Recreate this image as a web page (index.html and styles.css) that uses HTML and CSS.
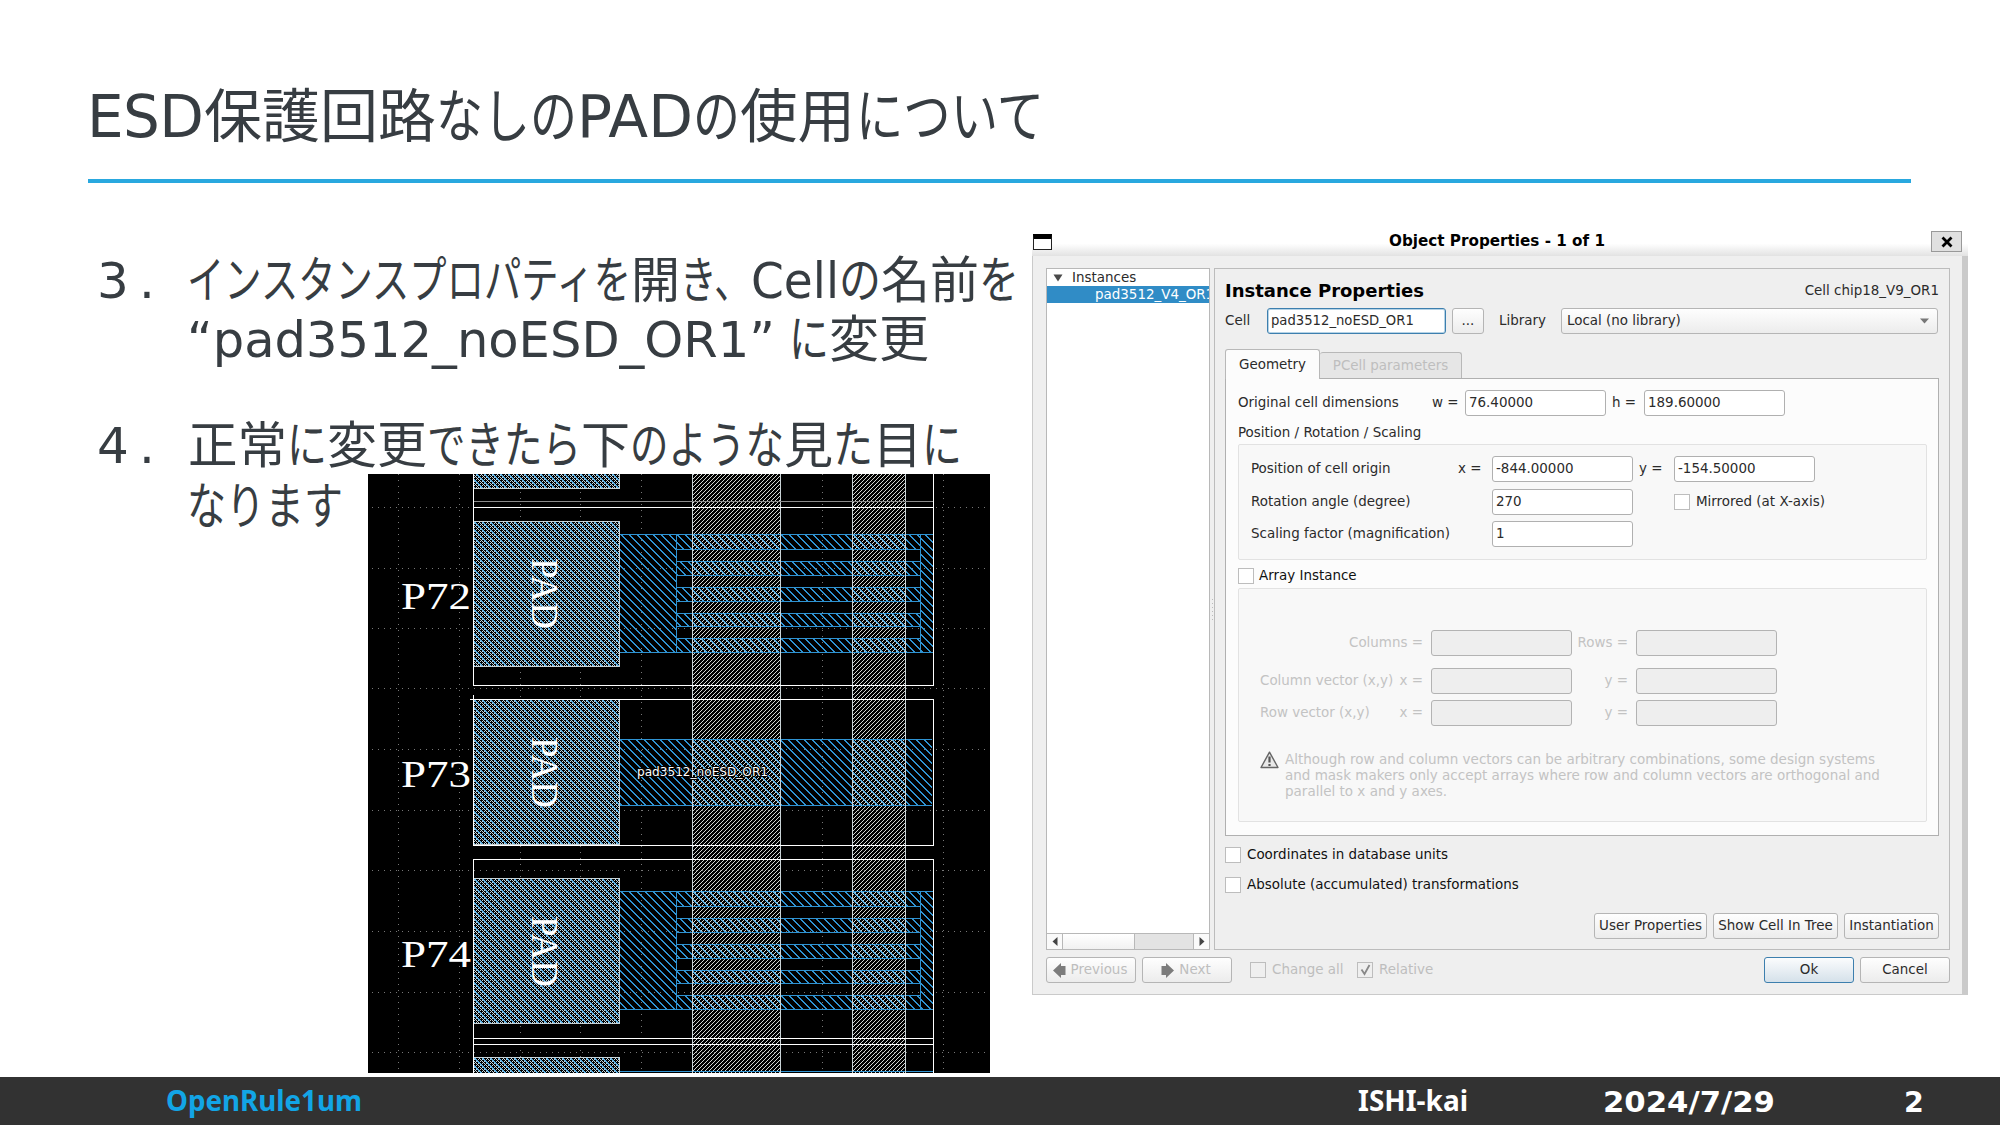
FILE: index.html
```html
<!DOCTYPE html>
<html lang="ja">
<head>
<meta charset="utf-8">
<title>ESD保護回路なしのPADの使用について</title>
<link rel="stylesheet" href="styles.css">
</head>
<body>
<div class="slide">
  <header class="head">
    <svg class="line" width="980" height="80" viewBox="80 75 980 80" font-size="58">
      <text x="87" y="137" textLength="117">ESD</text><text x="204" y="137" textLength="232" lengthAdjust="spacingAndGlyphs">保護回路</text><text x="436" y="137" textLength="141" lengthAdjust="spacingAndGlyphs">なしの</text><text x="577" y="137" textLength="116" lengthAdjust="spacingAndGlyphs">PAD</text><text x="693" y="137" textLength="47" lengthAdjust="spacingAndGlyphs">の</text><text x="740" y="137" textLength="115" lengthAdjust="spacingAndGlyphs">使用</text><text x="856" y="137" textLength="188" lengthAdjust="spacingAndGlyphs">について</text>
    </svg>
  </header>
  <main class="main">
    <section class="steps">
      <svg class="line" width="930" height="60" viewBox="90 250 930 60" font-size="50">
        <text x="97" y="297.500">3</text><text x="139" y="297.500">.</text><text x="187" y="297.500" textLength="444" lengthAdjust="spacingAndGlyphs">インスタンスプロパティを</text><text x="631" y="297.500" textLength="49" lengthAdjust="spacingAndGlyphs">開</text><text x="680" y="297.500" textLength="71" lengthAdjust="spacingAndGlyphs">き、</text><text x="751" y="297.500" textLength="88" lengthAdjust="spacingAndGlyphs">Cell</text><text x="839" y="297.500" textLength="42" lengthAdjust="spacingAndGlyphs">の</text><text x="881" y="297.500" textLength="98" lengthAdjust="spacingAndGlyphs">名前</text><text x="979" y="297.500" textLength="40" lengthAdjust="spacingAndGlyphs">を</text>
      </svg>
      <svg class="line" width="930" height="66" viewBox="90 310 930 66" font-size="50">
        <text x="187" y="357" textLength="588" lengthAdjust="spacingAndGlyphs">“pad3512_noESD_OR1”</text><text x="789" y="357" textLength="40" lengthAdjust="spacingAndGlyphs">に</text><text x="829" y="357" textLength="100" lengthAdjust="spacingAndGlyphs">変更</text>
      </svg>
      <svg class="line four" width="930" height="58" viewBox="90 416 930 58" font-size="50">
        <text x="97" y="463">4</text><text x="139" y="463">.</text><text x="188" y="463" textLength="99" lengthAdjust="spacingAndGlyphs">正常</text><text x="287" y="463" textLength="40" lengthAdjust="spacingAndGlyphs">に</text><text x="327" y="463" textLength="100" lengthAdjust="spacingAndGlyphs">変更</text><text x="427" y="463" textLength="154" lengthAdjust="spacingAndGlyphs">できたら</text><text x="581" y="463" textLength="49" lengthAdjust="spacingAndGlyphs">下</text><text x="630" y="463" textLength="154" lengthAdjust="spacingAndGlyphs">のような</text><text x="784" y="463" textLength="49" lengthAdjust="spacingAndGlyphs">見</text><text x="833" y="463" textLength="40" lengthAdjust="spacingAndGlyphs">た</text><text x="873" y="463" textLength="49" lengthAdjust="spacingAndGlyphs">目</text><text x="922" y="463" textLength="40" lengthAdjust="spacingAndGlyphs">に</text>
      </svg>
      <div class="last">
        <svg class="line" width="278" height="66" viewBox="90 474 278 66" font-size="50">
          <text x="187" y="523.500" textLength="156" lengthAdjust="spacingAndGlyphs">なります</text>
        </svg>
        <svg class="chip" width="622" height="599" viewBox="368 474 622 599" shape-rendering="crispEdges">
          <defs>
            <pattern id="metal" width="8" height="8" patternUnits="userSpaceOnUse"><path class="b" d="M0 0h2v1h-2zM1 1h2v1h-2zM2 2h2v1h-2zM3 3h2v1h-2zM4 4h2v1h-2zM5 5h2v1h-2zM6 6h2v1h-2zM7 7h1v1h-1zM0 7h1v1h-1z"/></pattern>
            <pattern id="metalpad" width="8" height="8" patternUnits="userSpaceOnUse"><path class="l" d="M0 0h2v1h-2zM1 1h2v1h-2zM2 2h2v1h-2zM3 3h2v1h-2zM4 4h2v1h-2zM5 5h2v1h-2zM6 6h2v1h-2zM7 7h1v1h-1zM0 7h1v1h-1z"/></pattern>
            <pattern id="poly" width="4" height="4" patternUnits="userSpaceOnUse"><path class="g" d="M3 0h1v1h-1zM2 1h1v1h-1zM1 2h1v1h-1zM0 3h1v1h-1z"/></pattern>
            <pattern id="open" width="4" height="4" patternUnits="userSpaceOnUse"><path class="p" d="M3 0h1v1h-1zM2 1h1v1h-1zM1 2h1v1h-1zM0 3h1v1h-1zM1 0h1v1h-1zM3 2h1v1h-1z"/></pattern>
            <pattern id="dh" width="6" height="2" patternUnits="userSpaceOnUse"><rect width="1" height="2" fill="#777"/></pattern>
            <pattern id="dv" width="2" height="6" patternUnits="userSpaceOnUse"><rect width="2" height="1" fill="#777"/></pattern>
            <g id="pad"><rect width="146" height="146" fill="#000"/><rect width="146" height="146" fill="url(#open)"/><rect width="146" height="146" fill="url(#metalpad)"/><rect class="o" x=".5" y=".5" width="146" height="145"/></g>
            <g id="comb">
              <rect width="57" height="118" fill="url(#metal)"/><rect x="301" width="13" height="118" fill="url(#metal)"/>
              <g fill="url(#metal)"><rect x="57" width="244" height="15"/><rect x="57" y="27" width="244" height="14"/><rect x="57" y="53" width="244" height="14"/><rect x="57" y="79" width="244" height="13"/><rect x="57" y="104" width="244" height="14"/></g>
              <path class="m" d="M0 .5H313M0 118.500H313M56.500 0V118M300.500 0V118M57 15.500H301M57 27.500H301M57 41.500H301M57 53.500H301M57 67.500H301M57 79.500H301M57 92.500H301M57 104.500H301"/>
            </g>
            <g id="over" fill="url(#metalpad)"><rect width="89" height="15"/><rect y="27" width="89" height="14"/><rect y="53" width="89" height="14"/><rect y="79" width="89" height="13"/><rect y="104" width="89" height="14"/><rect x="160" width="54" height="15"/><rect x="160" y="27" width="54" height="14"/><rect x="160" y="53" width="54" height="14"/><rect x="160" y="79" width="54" height="13"/><rect x="160" y="104" width="54" height="14"/></g>
          </defs>
          <rect x="368" y="474" width="622" height="599"/>
          <g fill="url(#dv)"><rect x="398" y="474" width="1" height="599"/><rect x="459" y="474" width="1" height="599"/><rect x="520" y="474" width="1" height="599"/><rect x="580" y="474" width="1" height="599"/><rect x="641" y="474" width="1" height="599"/><rect x="822" y="474" width="1" height="599"/><rect x="943" y="474" width="1" height="599"/></g>
          <g fill="url(#dh)"><rect x="368" y="507" width="622" height="1"/><rect x="368" y="568" width="622" height="1"/><rect x="368" y="628" width="622" height="1"/><rect x="368" y="688" width="622" height="1"/><rect x="368" y="749" width="622" height="1"/><rect x="368" y="810" width="622" height="1"/><rect x="368" y="870" width="622" height="1"/><rect x="368" y="931" width="622" height="1"/><rect x="368" y="992" width="622" height="1"/><rect x="368" y="1052" width="622" height="1"/></g>
          <g fill="url(#poly)"><rect x="692" y="474" width="89" height="599"/><rect x="852" y="474" width="54" height="599"/></g>
          <use href="#comb" x="620" y="534"/><use href="#over" x="692" y="534"/>
          <rect x="620" y="739" width="312" height="66" fill="url(#metal)"/><path class="m" d="M620 739.500H932M620 805.500H932"/>
          <g fill="url(#metalpad)"><rect x="692" y="740" width="89" height="65"/><rect x="852" y="740" width="54" height="65"/></g>
          <use href="#comb" x="620" y="891"/><use href="#over" x="692" y="891"/>
          <path class="m" d="M620 1071.500H933"/>
          <path class="o" d="M692.500 474V1073M780.500 474V1073M852.500 474V1073M905.500 474V1073"/>
          <use href="#pad" x="473" y="343"/>
          <use href="#pad" x="473" y="521"/>
          <use href="#pad" x="473" y="699"/>
          <use href="#pad" x="473" y="878"/>
          <use href="#pad" x="473" y="1057"/>
          <path class="grey" d="M474 501.500H933"/>
          <path class="w" d="M473.500 474V685.500H933.500V474M473 507.500H933M473.500 695V845.500H933.500V699.500H470M473.500 1073V859.500H933.500V1073M473 1038.500H933M473 1044.500H933"/>
          <g class="serif">
            <text x="401" y="609" textLength="70" lengthAdjust="spacingAndGlyphs">P72</text><text x="401" y="787" textLength="70" lengthAdjust="spacingAndGlyphs">P73</text><text x="401" y="967" textLength="70" lengthAdjust="spacingAndGlyphs">P74</text>
            <text transform="translate(532 558) rotate(90)" textLength="71">PAD</text><text transform="translate(532 737) rotate(90)" textLength="71">PAD</text><text transform="translate(532 916) rotate(90)" textLength="71">PAD</text>
          </g>
          <text class="tag" x="637" y="776" textLength="131" lengthAdjust="spacingAndGlyphs">pad3512_noESD_OR1</text>
        </svg>
      </div>
    </section>

    <section class="dialog">
      <div class="bar">
        <span class="winicon"></span><b>Object Properties - 1 of 1</b>
        <span class="close"><svg width="12" height="12" viewBox="0 0 12 12"><path d="M1.500 1.500L10.500 10.500M10.500 1.500L1.500 10.500" stroke="#000" stroke-width="2.800"/></svg></span>
      </div>
      <div class="body">
        <div class="cols">
          <div class="tree">
            <div class="row"><svg width="10" height="8" viewBox="0 0 10 8"><path d="M.5 .5H9.500L5 7.500z" fill="#4a4a4a"/></svg><span>Instances</span></div>
            <div class="row sel">pad3512_V4_OR1</div>
            <div class="scroll"><span class="sb"><svg width="6" height="9" viewBox="0 0 6 9"><path d="M5.500 0V9L.5 4.500z" fill="#444"/></svg></span><span class="thumb"></span><span class="trough"></span><span class="sb"><svg width="6" height="9" viewBox="0 0 6 9"><path d="M.5 0V9L5.500 4.500z" fill="#444"/></svg></span></div>
          </div>
          <div class="grip"><i></i><i></i><i></i><i></i><i></i><i></i></div>
          <div class="panel">
            <div class="ptitle"><h2>Instance Properties</h2><span>Cell chip18_V9_OR1</span></div>
            <div class="cellrow"><span>Cell</span><span class="in focus">pad3512_noESD_OR1</span><span class="btn more">...</span><span class="lib">Library</span><span class="btn combo">Local (no library)<svg width="9" height="6" viewBox="0 0 9 6"><path d="M0 .5H9L4.500 5.500z" fill="#777"/></svg></span></div>
            <div class="tabs"><span class="tab on">Geometry</span><span class="tab off">PCell parameters</span></div>
            <div class="pane">
              <div class="dims"><span>Original cell dimensions</span><span>w =</span><span class="in">76.40000</span><span class="lab">h =</span><span class="in">189.60000</span></div>
              <div class="cap">Position / Rotation / Scaling</div>
              <div class="group pos">
                <span>Position of cell origin</span><span>x =</span><span class="in">-844.00000</span><span class="lab">y =</span><span class="in last-in">-154.50000</span>
                <span>Rotation angle (degree)</span><span></span><span class="in">270</span><span></span><span class="chk"><i></i>Mirrored (at X-axis)</span>
                <span class="wide">Scaling factor (magnification)</span><span class="in">1</span>
              </div>
              <div class="chk arr"><i></i>Array Instance</div>
              <div class="group array">
                <div class="vec first"><span class="r">Columns =</span><span class="in dis"></span><span class="r">Rows =</span><span class="in dis"></span></div>
                <div class="vec"><span class="two"><span>Column vector (x,y)</span><span>x =</span></span><span class="in dis"></span><span class="r">y =</span><span class="in dis"></span></div>
                <div class="vec"><span class="two"><span>Row vector (x,y)</span><span>x =</span></span><span class="in dis"></span><span class="r">y =</span><span class="in dis"></span></div>
                <div class="warn"><svg width="19" height="18" viewBox="0 0 19 18"><path d="M9.500 1.200L18 16.500H1z" fill="#e9e9e9" stroke="#666" stroke-width="1.400" stroke-linejoin="round"/><path d="M9.500 5.500V11.500M9.500 13V15" stroke="#555" stroke-width="2.200"/></svg><p>Although row and column vectors can be arbitrary combinations, some design systems<br>and mask makers only accept arrays where row and column vectors are orthogonal and<br>parallel to x and y axes.</p></div>
              </div>
            </div>
            <div class="chk c1"><i></i>Coordinates in database units</div>
            <div class="chk c2"><i></i>Absolute (accumulated) transformations</div>
            <div class="pbtns"><span class="btn b1">User Properties</span><span class="btn b2">Show Cell In Tree</span><span class="btn b3">Instantiation</span></div>
          </div>
        </div>
        <div class="foot">
          <span class="btn nav"><svg width="13" height="15" viewBox="0 0 13 15"><path d="M0 7.500L8 0V3H12.500V12H8V15z" fill="#7c7c7c"/></svg>Previous</span>
          <span class="btn nav"><svg width="13" height="15" viewBox="0 0 13 15"><path d="M13 7.500L5 0V3H.5V12H5V15z" fill="#7c7c7c"/></svg>Next</span>
          <span class="chk ca"><i></i>Change all</span>
          <span class="chk rel"><i><svg width="11" height="12" viewBox="0 0 11 12"><path d="M1.500 5.500L4.500 10L9.500 1" fill="none" stroke="#888" stroke-width="1.800"/></svg></i>Relative</span>
          <span class="btn ok">Ok</span><span class="btn cancel">Cancel</span>
        </div>
      </div>
    </section>
  </main>
  <footer class="footer">
    <svg width="2000" height="48" viewBox="0 1077 2000 48">
      <text class="brand" x="166" y="1110.500" textLength="196" lengthAdjust="spacingAndGlyphs">OpenRule1um</text>
      <text x="1358" y="1110.500" textLength="110" lengthAdjust="spacingAndGlyphs">ISHI-kai</text>
      <text class="num" x="1603" y="1112" textLength="172" lengthAdjust="spacingAndGlyphs">2024/7/29</text>
      <text class="num" x="1904" y="1112">2</text>
    </svg>
  </footer>
</div>
</body>
</html>
```
FILE: styles.css
```css
* { box-sizing: border-box; }
body { margin: 0; background: #fff; }
svg { display: block; flex: none; }
.slide { width: 2000px; height: 1125px; display: flex; flex-direction: column; overflow: hidden; }

.head { height: 183px; margin: 0 89px 0 88px; padding-top: 75px; border-bottom: 4px solid #29a8df; }
.head .line { margin-left: -8px; }
.line { overflow: visible; fill: #373d42; font-family: "DejaVu Sans", "Noto Sans CJK JP", sans-serif; }
.main { display: flex; height: 894px; padding-top: 42px; }
.steps { width: 942px; margin: 25px 0 0 90px; flex: none; }
.steps .four { margin-top: 40px; }
.last { display: flex; align-items: flex-start; }

.chip .b { fill: #2f93d2; }
.chip .l { fill: #5db2e6; }
.chip .g { fill: #d4d6d2; }
.chip .p { fill: #c3d6de; }
.chip .o { fill: none; stroke: #c9d3d6; }
.chip .m { fill: none; stroke: #2f93d2; }
.chip .w { fill: none; stroke: #fff; }
.chip .grey { stroke: #8a8a8a; }
.chip .serif { fill: #fff; font: 37px "Liberation Serif", serif; }
.chip .tag { fill: #fff; stroke: #000; stroke-width: 2px; paint-order: stroke; font: 12px "DejaVu Sans", sans-serif; }

.dialog { width: 936px; height: 770px; flex: none; font: 13.44px/16px "DejaVu Sans", sans-serif; color: #2b2b2b; white-space: nowrap; }
.bar { height: 31px; padding: 0 6px 0 1px; display: grid; grid-template-columns: 30px 1fr 31px; align-items: center; background: linear-gradient(#fff 60%, #e2e2e2); }
.bar b { text-align: center; font-size: 15.2px; color: #000; }
.winicon { width: 19px; height: 16px; border: 1px solid #222; border-top: 5px solid #000; background: #fff; margin-top: 2px; }
.close { width: 31px; height: 21px; border: 1px solid #999; background: #e0e0e0; display: flex; align-items: center; justify-content: center; margin-top: 2px; }
.body { height: 739px; background: #efefef; border: solid #cacaca; border-width: 0 6px 1px 1px; padding: 12px 12px 0 13px; }
.cols { display: flex; height: 682px; }
.tree { width: 164px; background: #fff; border: 1px solid #b8b8b8; display: flex; flex-direction: column; overflow: hidden; }
.row { height: 17px; display: flex; align-items: center; padding: 1px 0 0 6px; gap: 9px; flex: none; }
.sel { background: #308cc6; color: #fff; padding-left: 48px; }
.scroll { margin-top: auto; height: 16px; display: flex; border-top: 1px solid #b8b8b8; }
.sb { width: 15px; display: flex; align-items: center; justify-content: center; background: #fafafa; }
.thumb { width: 73px; border: solid #b8b8b8; border-width: 0 1px; background: linear-gradient(#fff, #f1f1f1); }
.trough { flex: 1; background: #e3e3e3; border-right: 1px solid #b8b8b8; }
.grip { width: 4px; display: flex; flex-direction: column; justify-content: center; align-items: center; gap: 3px; }
.grip i { width: 1px; height: 1px; background: #bbb; }
.panel { flex: 1; border: 1px solid #bcbcbc; padding: 0 10px; display: flex; flex-direction: column; }
.ptitle { height: 39px; display: flex; justify-content: space-between; align-items: center; padding-top: 4px; }
h2 { margin: 0; font-size: 18px; color: #000; }
.cellrow { display: grid; grid-template-columns: 42px 179px 38px 77px 377px; height: 26px; align-items: center; }
.more { margin-left: 6px; }
.lib { padding-left: 15px; }
.in { height: 26px; border: 1px solid #b0b0b0; border-radius: 3px; background: #fff; padding: 0 3px; display: flex; align-items: center; color: #2b2b2b; }
.focus { border-color: #3d7fae; box-shadow: inset 0 0 0 1px #b5d3e6; font-size: 13.2px; }
.dis { background: #eee; border-color: #b3b3b3; }
.btn { height: 26px; border: 1px solid #b5b5b5; border-radius: 3px; background: linear-gradient(#fefefe, #ececec); display: flex; align-items: center; justify-content: center; }
.combo { justify-content: space-between; padding: 0 8px 0 5px; }
.tabs { height: 44px; display: flex; align-items: flex-end; }
.tab { display: flex; align-items: center; justify-content: center; border: 1px solid #b8b8b8; border-bottom: 0; border-radius: 3px 3px 0 0; }
.on { width: 95px; height: 30px; background: #fcfcfc; margin-bottom: -1px; position: relative; }
.off { width: 142px; height: 26px; background: #e6e6e6; color: #bebebe; border-left: 0; }
.pane { height: 458px; border: 1px solid #b0b0b0; background: #fcfcfc; padding: 11px 11px 0 12px; }
.dims { display: grid; grid-template-columns: 194px 33px 141px 38px 141px; align-items: center; }
.lab { padding-left: 6px; }
.cap { height: 28px; padding-top: 9px; }
.group { border: 1px solid #e2e2e2; background: #f8f8f8; border-radius: 2px; }
.pos { height: 116px; padding: 11px 0 0 12px; display: grid; grid-template-columns: 207px 34px 141px 41px 1fr; grid-auto-rows: 26px; row-gap: 6.500px; align-items: center; }
.last-in { width: 141px; }
.wide { grid-column: span 2; }
.chk { display: flex; align-items: center; gap: 6px; }
.chk i { width: 16px; height: 16px; border: 1px solid #bdbdbd; background: #fff; display: flex; align-items: center; justify-content: center; flex: none; }
.arr { height: 28px; gap: 5px; padding-top: 4px; color: #111; }
.array { height: 234px; padding: 41px 0 0 21px; color: #c3c3c3; }
.vec { display: grid; grid-template-columns: 171px 141px 64px 141px; align-items: center; margin-bottom: 6px; }
.first { margin-bottom: 12px; }
.r { text-align: right; padding-right: 8px; }
.two { display: flex; justify-content: space-between; padding-right: 8px; }
.warn { display: flex; gap: 6px; margin-top: 25px; }
p { margin: 0; font-size: 13.5px; }
.c1, .c2 { color: #111; height: 16px; }
.c1 { margin-top: 11px; }
.c2 { margin-top: 14px; }
.pbtns { display: flex; justify-content: flex-end; gap: 6px; margin-top: 20px; }
.b1 { width: 113px; }
.b2 { width: 125px; }
.b3 { width: 95px; }
.foot { display: flex; align-items: center; padding-top: 7px; color: #bebebe; }
.nav { width: 90px; margin-right: 6px; gap: 5px; padding-right: 2px; }
.foot .chk i { background: #efefef; }
.ca { margin-left: 12px; width: 107px; }
.ok { width: 90px; color: #2b2b2b; border-color: #3d7fae; background: linear-gradient(#fbfcfd, #d5e1ea); margin-left: auto; }
.cancel { width: 90px; color: #2b2b2b; margin-left: 6px; }

.footer { height: 48px; background: #323232; }
.footer text { font: bold 28.5px "Noto Sans", sans-serif; fill: #fff; }
.footer .brand { fill: #12a5e6; }
.footer .num { font: bold 28.5px "DejaVu Sans", sans-serif; }
```
